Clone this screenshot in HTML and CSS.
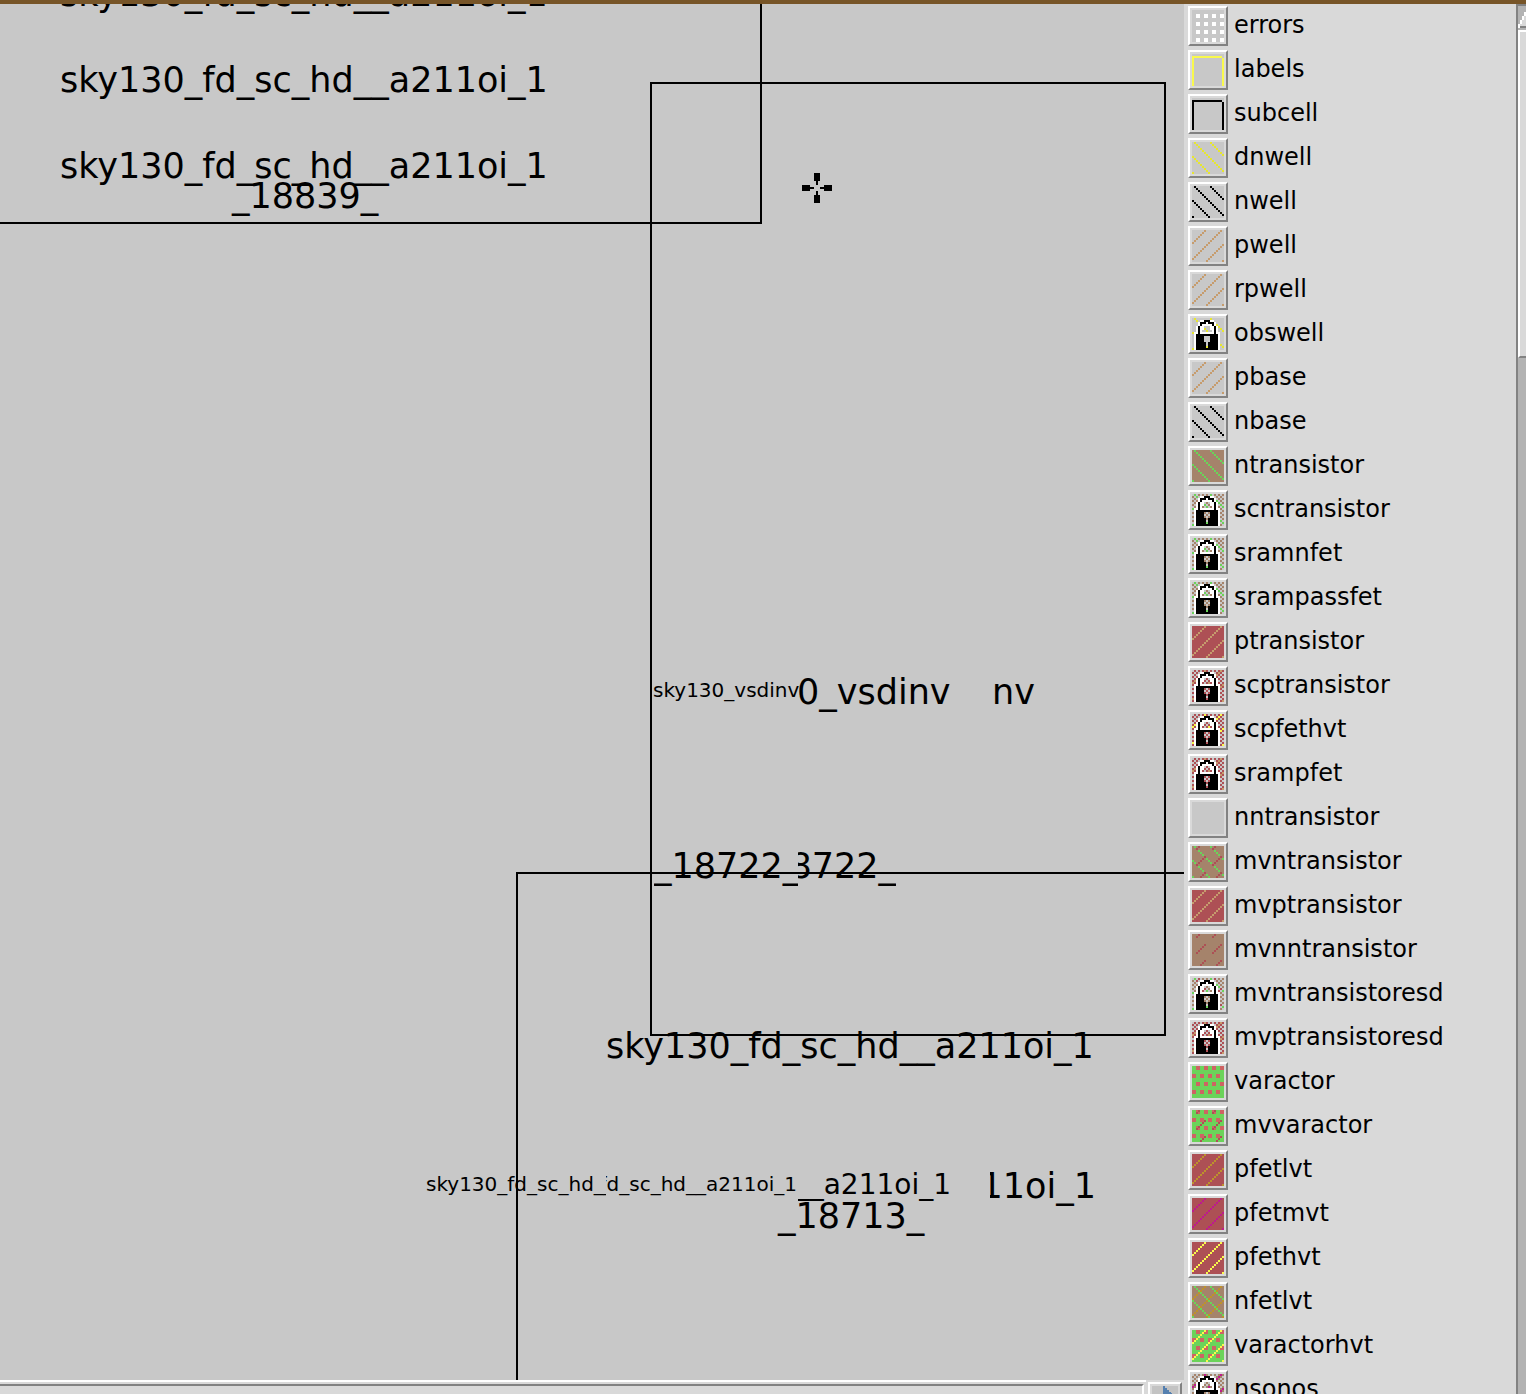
FILE: index.html
```
<!DOCTYPE html>
<html lang="en">
<head>
<meta charset="utf-8">
<title>Layout editor</title>
<link rel="stylesheet" href="styles.css">
</head>
<body>
<svg class="defs" aria-hidden="true">
  <defs>
    <path id="down8" d="M1 .5h1m0 1h1m0 1h1m0 1h1m0 1h1m0 1h1m0 1h1M0 7.5h1"/>
    <path id="up8" d="M6 .5h1m-2 1h1m-2 1h1m-2 1h1m-2 1h1m-2 1h1m-2 1h1M7 7.5h1"/>
    <path id="dash8" d="M3 .5h1m-2 1h1M6 5.5h1m-2 1h1m-2 1h1"/>
    <g id="down"><use href="#down8"/><use href="#down8" x="8"/><use href="#down8" y="8"/><use href="#down8" x="8" y="8"/></g>
    <g id="up"><use href="#up8"/><use href="#up8" x="8"/><use href="#up8" y="8"/><use href="#up8" x="8" y="8"/></g>
    <g id="dash"><use href="#dash8"/><use href="#dash8" x="8"/><use href="#dash8" y="8"/><use href="#dash8" x="8" y="8"/></g>
    <path id="fill" d="M0 8h16" stroke-width="16"/>
    <path id="check" stroke-dasharray="1 1" d="M1 .5h15M0 1.5h16M1 2.5h15M0 3.5h16M1 4.5h15M0 5.5h16M1 6.5h15M0 7.5h16M1 8.5h15M0 9.5h16M1 10.5h15M0 11.5h16M1 12.5h15M0 13.5h16M1 14.5h15M0 15.5h16"/>
    <path id="dots" stroke-width="2" stroke-dasharray="2 2" d="M2 1h14M0 5h16M2 9h14M0 13h16"/>
    <path id="grid" stroke-width="2" stroke-dasharray="2 2" d="M2 3h14M2 7h14M2 11h14M2 15h14"/>
    <path id="frame" d="M0 1.5h15M.5 1v15M15.5 2v14"/>
    <g id="lock" stroke="none">
      <path fill="#fff" fill-rule="evenodd" d="M4 1h7v1h1v2h1v3h1v9H1V7h1V4h1V2h1zM6 4h3v2h1v1H5V6h1zM6 9v3h1v3h1v-3h1V9z"/>
      <path fill="#000" fill-rule="evenodd" d="M6 1h3v1h2v2h1v4h1v8H2V8h1V4h1V2h2zM7 2v1H5v1H4v4h7V4h-1V3H8V2zM6 9v3h1v3h1v-3h1V9z"/>
    </g>
  </defs>
</svg>
<div class="app">
  <header class="titlebar"></header>
  <main class="workspace">
    <section class="view">
      <div class="canvas">
        <div class="cell cell-a"></div>
        <div class="cell cell-b"></div>
        <div class="cell cell-c"></div>
        <span class="name n1">sky130_fd_sc_hd__a211oi_1</span>
        <span class="name n2">sky130_fd_sc_hd__a211oi_1</span>
        <span class="name n3">sky130_fd_sc_hd__a211oi_1</span>
        <span class="name n4">_18839_</span>
        <span class="name small n5">sky130_vsdinv</span>
        <span class="name n6">0_vsdinv</span>
        <span class="name n7">nv</span>
        <span class="name clip n8">_18722_</span>
        <span class="name clip end n9">8722_</span>
        <span class="name n10">sky130_fd_sc_hd__a211oi_1</span>
        <span class="name small clip n11">sky130_fd_sc_hd__</span>
        <span class="name small clip end n12">fd_sc_hd__a211oi_1</span>
        <span class="name medium clip end n13">__a211oi_1</span>
        <span class="name clip end n14">11oi_1</span>
        <span class="name n15">_18713_</span>
        <svg class="cursor" viewBox="0 0 15 15" aria-hidden="true"><path d="M6 0h3v4H8v2H7V4H6zM6 15h3v-4H8V9H7v2H6zM0 6h4v1h2v1H4v1H0zM15 6h-4v1H9v1h2v1h4z"/></svg>
      </div>
      <div class="hscroll">
        <div class="htrack"></div>
        <button class="harrow" aria-label="Scroll right"><svg viewBox="0 0 14 14" aria-hidden="true"><path fill="#5580b0" d="M6 0h1v1h1v1h1v1h1v1h1v1h1v1h1v2H6z"/></svg></button>
      </div>
    </section>
    <aside class="palette">
      <ul class="layers">
        <li><button id="l1" class="swatch"><svg viewBox="0 0 16 16"><use href="#grid" stroke="#fff"/></svg></button><label for="l1">errors</label></li>
        <li><button id="l2" class="swatch"><svg viewBox="0 0 16 16"><use href="#frame" class="yellow"/></svg></button><label for="l2">labels</label></li>
        <li><button id="l3" class="swatch"><svg viewBox="0 0 16 16"><use href="#frame" class="black"/></svg></button><label for="l3">subcell</label></li>
        <li><button id="l4" class="swatch"><svg viewBox="0 0 16 16"><use href="#down" class="straw"/></svg></button><label for="l4">dnwell</label></li>
        <li><button id="l5" class="swatch"><svg viewBox="0 0 16 16"><use href="#down" class="black"/></svg></button><label for="l5">nwell</label></li>
        <li><button id="l6" class="swatch"><svg viewBox="0 0 16 16"><use href="#up" class="tan"/></svg></button><label for="l6">pwell</label></li>
        <li><button id="l7" class="swatch"><svg viewBox="0 0 16 16"><use href="#up" class="tan"/></svg></button><label for="l7">rpwell</label></li>
        <li><button id="l8" class="swatch"><svg viewBox="0 0 16 16"><use href="#down" class="straw"/><use href="#lock"/></svg></button><label for="l8">obswell</label></li>
        <li><button id="l9" class="swatch"><svg viewBox="0 0 16 16"><use href="#up" class="tan"/></svg></button><label for="l9">pbase</label></li>
        <li><button id="l10" class="swatch"><svg viewBox="0 0 16 16"><use href="#down" class="black"/></svg></button><label for="l10">nbase</label></li>
        <li><button id="l11" class="swatch"><svg viewBox="0 0 16 16"><use href="#fill" class="brown"/><use href="#down" class="green"/></svg></button><label for="l11">ntransistor</label></li>
        <li><button id="l12" class="swatch"><svg viewBox="0 0 16 16"><use href="#check" class="brown"/><use href="#down" class="green"/><use href="#lock"/></svg></button><label for="l12">scntransistor</label></li>
        <li><button id="l13" class="swatch"><svg viewBox="0 0 16 16"><use href="#check" class="brown"/><use href="#down" class="green"/><use href="#lock"/></svg></button><label for="l13">sramnfet</label></li>
        <li><button id="l14" class="swatch"><svg viewBox="0 0 16 16"><use href="#check" class="brown"/><use href="#down" class="green"/><use href="#lock"/></svg></button><label for="l14">srampassfet</label></li>
        <li><button id="l15" class="swatch"><svg viewBox="0 0 16 16"><use href="#fill" class="red"/><use href="#up" class="tan"/></svg></button><label for="l15">ptransistor</label></li>
        <li><button id="l16" class="swatch"><svg viewBox="0 0 16 16"><use href="#check" class="red"/><use href="#up" class="tan"/><use href="#lock"/></svg></button><label for="l16">scptransistor</label></li>
        <li><button id="l17" class="swatch"><svg viewBox="0 0 16 16"><use href="#check" class="red"/><use href="#up" class="yellow"/><use href="#lock"/></svg></button><label for="l17">scpfethvt</label></li>
        <li><button id="l18" class="swatch"><svg viewBox="0 0 16 16"><use href="#check" class="red"/><use href="#up" class="tan"/><use href="#lock"/></svg></button><label for="l18">srampfet</label></li>
        <li><button id="l19" class="swatch"><svg viewBox="0 0 16 16"></svg></button><label for="l19">nntransistor</label></li>
        <li><button id="l20" class="swatch"><svg viewBox="0 0 16 16"><use href="#fill" class="brown"/><use href="#down" class="green"/><use href="#dash" class="red"/></svg></button><label for="l20">mvntransistor</label></li>
        <li><button id="l21" class="swatch"><svg viewBox="0 0 16 16"><use href="#fill" class="red"/><use href="#up" class="tan"/></svg></button><label for="l21">mvptransistor</label></li>
        <li><button id="l22" class="swatch"><svg viewBox="0 0 16 16"><use href="#fill" class="brown"/><use href="#dash" class="red"/></svg></button><label for="l22">mvnntransistor</label></li>
        <li><button id="l23" class="swatch"><svg viewBox="0 0 16 16"><use href="#check" class="brown"/><use href="#down" class="green"/><use href="#dash" class="red"/><use href="#lock"/></svg></button><label for="l23">mvntransistoresd</label></li>
        <li><button id="l24" class="swatch"><svg viewBox="0 0 16 16"><use href="#check" class="red"/><use href="#up" class="tan"/><use href="#lock"/></svg></button><label for="l24">mvptransistoresd</label></li>
        <li><button id="l25" class="swatch"><svg viewBox="0 0 16 16"><use href="#fill" class="green"/><use href="#dots" class="rose"/></svg></button><label for="l25">varactor</label></li>
        <li><button id="l26" class="swatch"><svg viewBox="0 0 16 16"><use href="#fill" class="green"/><use href="#dots" class="rose"/><use href="#dash" class="red"/></svg></button><label for="l26">mvvaractor</label></li>
        <li><button id="l27" class="swatch"><svg viewBox="0 0 16 16"><use href="#fill" class="red"/><use href="#up" class="gold"/></svg></button><label for="l27">pfetlvt</label></li>
        <li><button id="l28" class="swatch"><svg viewBox="0 0 16 16"><use href="#fill" class="red"/><use href="#up" class="magenta"/></svg></button><label for="l28">pfetmvt</label></li>
        <li><button id="l29" class="swatch"><svg viewBox="0 0 16 16"><use href="#fill" class="red"/><use href="#up" class="yellow"/></svg></button><label for="l29">pfethvt</label></li>
        <li><button id="l30" class="swatch"><svg viewBox="0 0 16 16"><use href="#fill" class="brown"/><use href="#up" class="gold"/><use href="#down" class="green"/></svg></button><label for="l30">nfetlvt</label></li>
        <li><button id="l31" class="swatch"><svg viewBox="0 0 16 16"><use href="#fill" class="green"/><use href="#dots" class="rose"/><use href="#up" class="yellow"/></svg></button><label for="l31">varactorhvt</label></li>
        <li><button id="l32" class="swatch"><svg viewBox="0 0 16 16"><use href="#check" class="brown"/><use href="#up" class="magenta"/><use href="#lock"/></svg></button><label for="l32">nsonos</label></li>
      </ul>
      <div class="vscroll">
        <svg class="varrow" viewBox="0 0 4 11" aria-hidden="true"><path fill="#d9d9d9" d="M1 10V8h1V6h1V4h1v6z"/><path fill="#fff" d="M3 3h1v2H3zM2 5h1v2H2zM1 7h1v2H1zM0 9h1v2H0z"/><path fill="#828282" d="M1 10h3v1H1z"/></svg>
        <div class="vthumb"></div>
      </div>
    </aside>
  </main>
</div>
</body>
</html>
```

FILE: styles.css
```
* { box-sizing: border-box; }
body {
  margin: 0;
  background: #d9d9d9;
  color: #000;
  font-family: "DejaVu Sans", sans-serif;
}
.defs { position: absolute; width: 0; height: 0; }

.app {
  display: flex;
  flex-direction: column;
  height: 100vh;
  overflow: hidden;
}
.titlebar { flex: none; height: 4px; background: #775528; }
.workspace { flex: 1; min-height: 0; display: flex; }

.view { flex: 1; min-width: 0; display: flex; flex-direction: column; }
.canvas {
  position: relative;
  flex: 1;
  min-height: 0;
  overflow: hidden;
  background: #c8c8c8;
}
.cell { position: absolute; border: 0 solid #000; }
.cell-a { left: 0; top: 0; width: 762px; height: 220px; border-width: 0 2px 2px 0; }
.cell-b { left: 650px; top: 78px; width: 516px; height: 954px; border-width: 2px; }
.cell-c { left: 516px; top: 868px; right: 0; bottom: 0; border-width: 2px 0 0 2px; }

.name {
  position: absolute;
  font-size: 35px;
  line-height: 40px;
  white-space: nowrap;
}
.small { font-size: 20px; line-height: 24px; }
.medium { font-size: 28px; line-height: 32px; }
.clip { display: flex; overflow: hidden; }
.end { justify-content: flex-end; }
.n1 { left: 60px; top: -30px; }
.n2 { left: 60px; top: 56px; }
.n3 { left: 60px; top: 142px; }
.n4 { left: 232px; top: 172px; }
.n5 { left: 653px; top: 674px; }
.n6 { left: 797px; top: 668px; }
.n7 { left: 992px; top: 668px; }
.n8 { left: 654px; top: 842px; width: 144px; }
.n9 { left: 798px; top: 842px; width: 98px; }
.n10 { left: 606px; top: 1022px; }
.n11 { left: 426px; top: 1168px; width: 180px; }
.n12 { left: 606px; top: 1168px; width: 191px; }
.n13 { left: 798px; top: 1165px; width: 153px; }
.n14 { left: 990px; top: 1162px; width: 106px; }
.n15 { left: 778px; top: 1192px; }
.cursor { position: absolute; left: 802px; top: 169px; width: 30px; height: 30px; shape-rendering: crispEdges; }

.hscroll { flex: none; height: 14px; display: flex; gap: 2px; padding-right: 2px; overflow: hidden; }
.htrack {
  flex: 1;
  border-top: 2px solid #fff;
  position: relative;
}
.htrack::after {
  content: "";
  position: absolute;
  inset: 2px 2px 0 0;
  border-top: 2px solid #828282;
  border-right: 2px solid #fff;
}
.harrow, .swatch {
  flex: none;
  margin: 0;
  padding: 2px;
  border: 2px solid;
  border-color: #fff #828282 #828282 #fff;
  background: #d9d9d9;
}
.harrow { width: 34px; height: 34px; margin-top: 2px; }
.harrow svg { display: block; width: 26px; height: 26px; background: #c3c3c3; shape-rendering: crispEdges; }

.palette { flex: none; width: 342px; display: flex; }
.layers {
  flex: 1;
  margin: 0;
  padding: 2px 4px;
  list-style: none;
  display: flex;
  flex-direction: column;
  gap: 4px;
}
.layers li { display: flex; align-items: center; gap: 6px; height: 40px; flex: none; }
.layers label { padding-bottom: 2px; font-size: 24px; line-height: 28px; }
.swatch { width: 40px; height: 40px; }
.swatch svg {
  display: block;
  width: 32px;
  height: 32px;
  background: #c8c8c8;
  shape-rendering: crispEdges;
  fill: none;
}
.black { stroke: #000; }
.yellow { stroke: #f9f94c; }
.straw { stroke: #e6e630; }
.tan { stroke: #c69c6d; }
.brown { stroke: #a5836b; }
.green { stroke: #6bd35a; }
.red { stroke: #ad5055; }
.rose { stroke: #ce6363; }
.gold { stroke: #bd922c; }
.magenta { stroke: #bd1c8c; }

.vscroll {
  flex: none;
  width: 10px;
  display: flex;
  flex-direction: column;
  background: #b3b3b3;
  border-top: 2px solid #828282;
  border-left: 2px solid #828282;
}
.varrow { flex: none; width: 8px; height: 22px; shape-rendering: crispEdges; }
.vthumb {
  flex: none;
  height: 328px;
  margin-top: 2px;
  background: #d9d9d9;
  border-top: 2px solid #fff;
  border-left: 2px solid #fff;
  border-bottom: 2px solid #828282;
}
```
